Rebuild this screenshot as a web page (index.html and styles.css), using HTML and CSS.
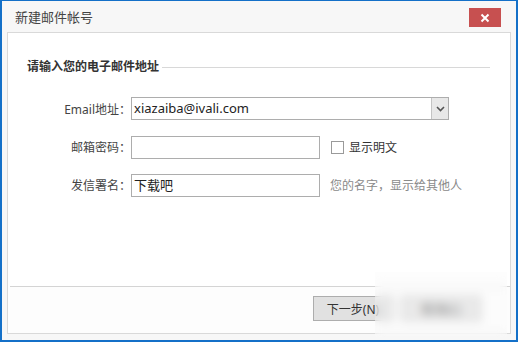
FILE: index.html
```html
<!DOCTYPE html>
<html lang="zh-CN">
<head>
    <meta charset="UTF-8">
    <title>新建邮件帐号</title>
    <link rel="stylesheet" href="styles.css">
</head>
<body>
    <div class="window">
        <div class="titlebar">
            <span class="title">新建邮件帐号</span>
            <button class="close-btn" aria-label="关闭">
                <svg width="10" height="10" viewBox="0 0 10 10">
                    <path d="M1.5 1.5 L8.5 8.5 M8.5 1.5 L1.5 8.5" stroke="#fff" stroke-width="2"/>
                </svg>
            </button>
        </div>

        <div class="panel">
            <div class="section-title">
                <span>请输入您的电子邮件地址</span>
                <div class="rule"></div>
            </div>

            <div class="form">
                <label class="label">Email地址<span class="punct">：</span></label>
                <div class="combo">
                    <span class="combo-text">xiazaiba@ivali.com</span>
                    <span class="combo-arrow">
                        <svg width="9" height="6" viewBox="0 0 9 6">
                            <path d="M1 1 L4.5 4.5 L8 1" fill="none" stroke="#555" stroke-width="1.6"/>
                        </svg>
                    </span>
                </div>

                <label class="label">邮箱密码<span class="punct">：</span></label>
                <div class="field-row">
                    <div class="input"></div>
                    <span class="check"></span>
                    <span class="check-text">显示明文</span>
                </div>

                <label class="label">发信署名<span class="punct">：</span></label>
                <div class="field-row">
                    <div class="input">下载吧</div>
                    <span class="hint">您的名字<span class="punct">，</span>显示给其他人</span>
                </div>
            </div>

            <div class="spacer"></div>

            <div class="footer">
                <button class="btn">下一步(N)</button>
                <button class="btn">取消(C)</button>
            </div>
        </div>

        <div class="blur-mark"></div>
    </div>
</body>
</html>
```

FILE: styles.css
```css
body {
    margin: 0;
    background: #fff;
    font-family: "Noto Sans", "Noto Sans CJK SC", sans-serif;
    font-size: 12px;
    color: #333;
}
.window {
    position: relative;
    width: 518px;
    height: 342px;
    box-sizing: border-box;
    border-style: solid;
    border-color: #1470c8;
    border-width: 1px 2px 2px 2px;
    background: #f7f7f7;
    display: flex;
    flex-direction: column;
}
.titlebar {
    height: 31px;
    display: flex;
    align-items: flex-start;
    padding-left: 13px;
}
.title {
    font-size: 13px;
    color: #444;
    line-height: 18px;
    margin-top: 7px;
}
.close-btn {
    margin-left: auto;
    margin-right: 15px;
    margin-top: 7px;
    width: 32px;
    height: 19px;
    border: none;
    padding: 0;
    background: #c75050;
    display: flex;
    align-items: center;
    justify-content: center;
}
.panel {
    margin: 0 5px;
    height: 302px;
    box-sizing: border-box;
    border: 1px solid #d9d9d9;
    background: #fff;
    display: flex;
    flex-direction: column;
}
.section-title {
    display: flex;
    align-items: center;
    padding: 26px 20px 0 19px;
    font-weight: bold;
    line-height: 16px;
    color: #333;
}
.rule {
    flex: 1;
    height: 1px;
    background: #d8d8d8;
    margin-left: 3px;
}
.form {
    margin-top: 22px;
    display: grid;
    grid-template-columns: 123px auto;
    row-gap: 14px;
}
.label {
    text-align: right;
    line-height: 23px;
    color: #444;
}
/* 全角标点居中显示 */
.punct {
    font-family: "Noto Sans CJK TC", sans-serif;
}
.combo {
    width: 318px;
    height: 23px;
    box-sizing: border-box;
    border: 1px solid #adadad;
    display: flex;
}
.combo-text {
    flex: 1;
    padding-left: 2px;
    font-size: 13px;
    line-height: 21px;
    color: #222;
}
.combo-arrow {
    width: 16px;
    border-left: 1px solid #c4c4c4;
    background: #e8e8e8;
    display: flex;
    align-items: center;
    justify-content: center;
}
.field-row {
    display: flex;
    align-items: center;
}
.input {
    width: 189px;
    height: 23px;
    box-sizing: border-box;
    border: 1px solid #adadad;
    padding-left: 2px;
    font-size: 13px;
    line-height: 21px;
    color: #222;
}
.check {
    width: 11px;
    height: 11px;
    border: 1px solid #9a9a9a;
    margin-left: 11px;
}
.check-text {
    margin-left: 5px;
    color: #333;
}
.hint {
    margin-left: 10px;
    color: #8a8a8a;
}
.spacer {
    flex: 1;
}
.footer {
    margin-left: 2px;
    height: 47px;
    box-sizing: border-box;
    border-top: 1px solid #d4d4d4;
    background: #fdfdfd;
    display: flex;
    align-items: flex-start;
    justify-content: flex-end;
    gap: 8px;
    padding: 9px 29px 0 0;
}
.btn {
    width: 80px;
    height: 25px;
    border: 1px solid #adadad;
    background: #e1e1e1;
    font-family: inherit;
    font-size: 12px;
    color: #333;
    padding: 0;
}
.blur-mark {
    position: absolute;
    left: 373px;
    top: 271px;
    width: 132px;
    height: 65px;
    backdrop-filter: blur(5px);
    background: rgba(250, 250, 250, 0.35);
}
```
